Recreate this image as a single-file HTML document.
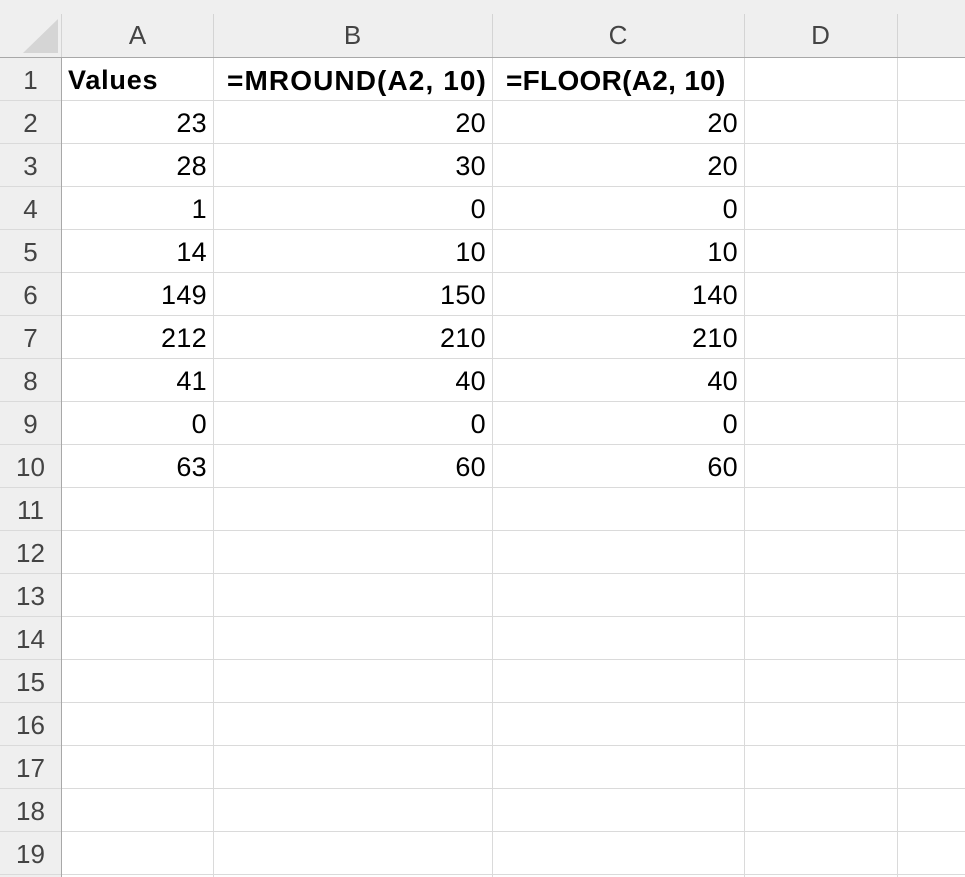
<!DOCTYPE html>
<html><head><style>
body{margin:0;width:965px;height:877px;background:#fff;position:relative;overflow:hidden;font-family:"Liberation Sans",sans-serif;}
.hd{position:absolute;background:#efefef;}
.l{position:absolute;background:#dadada;}
.h{position:absolute;left:0;width:965px;height:1px;background:#dadada}
.t{position:absolute;height:43px;line-height:45px;font-size:27px;color:#000;white-space:nowrap;letter-spacing:0.3px}
.r{text-align:right}
.a{left:62px;width:145px}.b{left:213px;width:273px}.c{left:492px;width:246px}
.rn{position:absolute;left:0;width:61px;text-align:center;height:43px;line-height:45px;font-size:26px;color:#444}
.cn{position:absolute;top:0;height:57px;line-height:70px;text-align:center;font-size:26px;color:#444}
</style></head><body>
<div class="hd" style="left:0;top:0;width:965px;height:57px"></div>
<div class="hd" style="left:0;top:0;width:61px;height:877px"></div>
<svg style="position:absolute;left:0;top:0" width="61" height="57"><polygon points="23,53 58,53 58,19" fill="#d5d5d5"/></svg>
<div class="l" style="left:61px;top:14px;width:1px;height:43px;background:#d4d4d4"></div>
<div class="l" style="left:213px;top:14px;width:1px;height:43px;background:#d4d4d4"></div>
<div class="l" style="left:492px;top:14px;width:1px;height:43px;background:#d4d4d4"></div>
<div class="l" style="left:744px;top:14px;width:1px;height:43px;background:#d4d4d4"></div>
<div class="l" style="left:897px;top:14px;width:1px;height:43px;background:#d4d4d4"></div>
<div class="l" style="left:213px;top:58px;width:1px;height:819px"></div>
<div class="l" style="left:492px;top:58px;width:1px;height:819px"></div>
<div class="l" style="left:744px;top:58px;width:1px;height:819px"></div>
<div class="l" style="left:897px;top:58px;width:1px;height:819px"></div>
<div class="h" style="top:100px"></div><div class="h" style="top:143px"></div><div class="h" style="top:186px"></div><div class="h" style="top:229px"></div><div class="h" style="top:272px"></div><div class="h" style="top:315px"></div><div class="h" style="top:358px"></div><div class="h" style="top:401px"></div><div class="h" style="top:444px"></div><div class="h" style="top:487px"></div><div class="h" style="top:530px"></div><div class="h" style="top:573px"></div><div class="h" style="top:616px"></div><div class="h" style="top:659px"></div><div class="h" style="top:702px"></div><div class="h" style="top:745px"></div><div class="h" style="top:788px"></div><div class="h" style="top:831px"></div><div class="h" style="top:874px"></div>
<div style="position:absolute;left:0;top:57px;width:965px;height:1px;background:#a8a8a8"></div>
<div style="position:absolute;left:61px;top:57px;width:1px;height:820px;background:#a8a8a8"></div>
<div class="cn" style="left:62px;width:151px">A</div>
<div class="cn" style="left:213px;width:279px">B</div>
<div class="cn" style="left:492px;width:252px">C</div>
<div class="cn" style="left:744px;width:153px">D</div>

<div class="rn" style="top:58px">1</div><div class="rn" style="top:101px">2</div><div class="rn" style="top:144px">3</div><div class="rn" style="top:187px">4</div><div class="rn" style="top:230px">5</div><div class="rn" style="top:273px">6</div><div class="rn" style="top:316px">7</div><div class="rn" style="top:359px">8</div><div class="rn" style="top:402px">9</div><div class="rn" style="top:445px">10</div><div class="rn" style="top:488px">11</div><div class="rn" style="top:531px">12</div><div class="rn" style="top:574px">13</div><div class="rn" style="top:617px">14</div><div class="rn" style="top:660px">15</div><div class="rn" style="top:703px">16</div><div class="rn" style="top:746px">17</div><div class="rn" style="top:789px">18</div><div class="rn" style="top:832px">19</div>

<div class="t" style="left:68px;top:58px;font-weight:bold;letter-spacing:0.8px">Values</div>
<div class="t" style="left:227px;top:58px;font-weight:bold;font-size:28px;letter-spacing:1.1px">=MROUND(A2, 10)</div>
<div class="t" style="left:506px;top:58px;font-weight:bold;font-size:28px;letter-spacing:0.3px">=FLOOR(A2, 10)</div>

<div class="t r a" style="top:101px">23</div><div class="t r b" style="top:101px">20</div><div class="t r c" style="top:101px">20</div>
<div class="t r a" style="top:144px">28</div><div class="t r b" style="top:144px">30</div><div class="t r c" style="top:144px">20</div>
<div class="t r a" style="top:187px">1</div><div class="t r b" style="top:187px">0</div><div class="t r c" style="top:187px">0</div>
<div class="t r a" style="top:230px">14</div><div class="t r b" style="top:230px">10</div><div class="t r c" style="top:230px">10</div>
<div class="t r a" style="top:273px">149</div><div class="t r b" style="top:273px">150</div><div class="t r c" style="top:273px">140</div>
<div class="t r a" style="top:316px">212</div><div class="t r b" style="top:316px">210</div><div class="t r c" style="top:316px">210</div>
<div class="t r a" style="top:359px">41</div><div class="t r b" style="top:359px">40</div><div class="t r c" style="top:359px">40</div>
<div class="t r a" style="top:402px">0</div><div class="t r b" style="top:402px">0</div><div class="t r c" style="top:402px">0</div>
<div class="t r a" style="top:445px">63</div><div class="t r b" style="top:445px">60</div><div class="t r c" style="top:445px">60</div>
</body></html>
